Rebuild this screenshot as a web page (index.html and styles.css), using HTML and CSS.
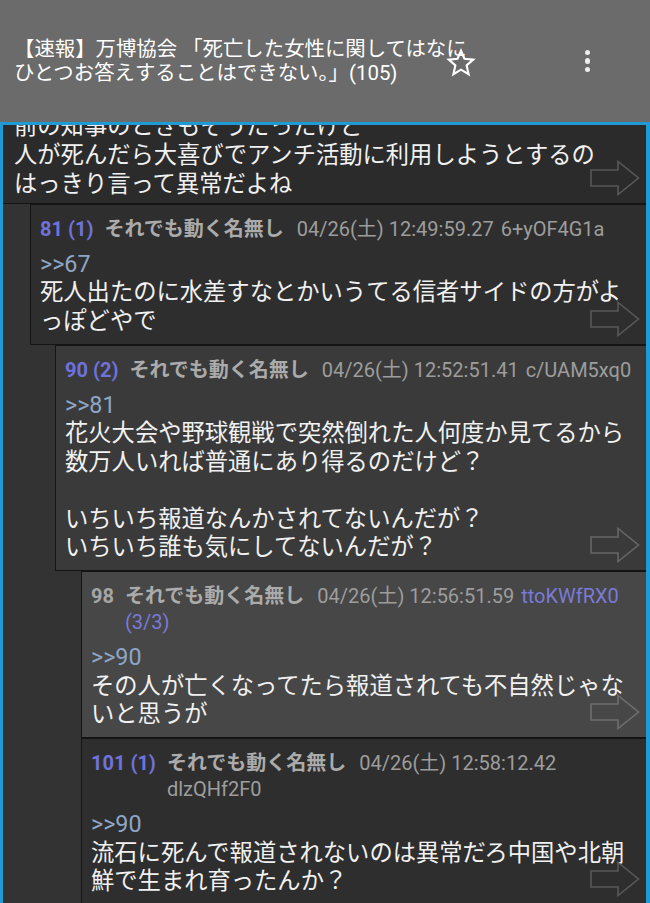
FILE: index.html
```html
<!DOCTYPE html>
<html lang="ja">
<head>
<meta charset="utf-8">
<title>スレッド</title>
<link rel="stylesheet" href="styles.css">
</head>
<body>
<div class="app">
  <header class="topbar">
    <div class="title">【速報】万博協会 「死亡した女性に関してはなにひとつお答えすることはできない。」(105)</div>
    <svg class="star" viewBox="0 0 24 24"><path d="M12 2.2 L14.8 8.6 L21.8 9.3 L16.5 14 L18.1 21 L12 17.3 L5.9 21 L7.5 14 L2.2 9.3 L9.2 8.6 Z" fill="none" stroke="#fff" stroke-width="1.7" stroke-linejoin="miter"/></svg>
    <div class="menu"><span></span><span></span><span></span></div>
  </header>
  <main class="thread">
    <article class="post d0 first">
      <div class="text">前の知事のときもそうだったけど<br>人が死んだら大喜びでアンチ活動に利用しようとするの<br>はっきり言って異常だよね</div>
      <svg class="arrow" viewBox="0 0 50 36"><path d="M1 10 H28 V1.5 L48.5 18 L28 34.5 V26 H1 Z" fill="none" stroke="#585858" stroke-width="1.6"/></svg>
    </article>
    <article class="post d1">
      <div class="meta"><span class="num">81 (1)</span><span class="info"><b class="name">それでも動く名無し</b> <span class="date">04/26(土) 12:49:59.27</span> <span class="id">6+yOF4G1a</span></span></div>
      <div class="text"><span class="anchor">&gt;&gt;67</span><br>死人出たのに水差すなとかいうてる信者サイドの方がよっぽどやで</div>
      <svg class="arrow" viewBox="0 0 50 36"><path d="M1 10 H28 V1.5 L48.5 18 L28 34.5 V26 H1 Z" fill="none" stroke="#585858" stroke-width="1.6"/></svg>
    </article>
    <article class="post d2">
      <div class="meta"><span class="num">90 (2)</span><span class="info"><b class="name">それでも動く名無し</b> <span class="date">04/26(土) 12:52:51.41</span> <span class="id">c/UAM5xq0</span></span></div>
      <div class="text"><span class="anchor">&gt;&gt;81</span><br>花火大会や野球観戦で突然倒れた人何度か見てるから<br>数万人いれば普通にあり得るのだけど？<br><br>いちいち報道なんかされてないんだが？<br>いちいち誰も気にしてないんだが？</div>
      <svg class="arrow" viewBox="0 0 50 36"><path d="M1 10 H28 V1.5 L48.5 18 L28 34.5 V26 H1 Z" fill="none" stroke="#666" stroke-width="1.6"/></svg>
    </article>
    <article class="post d3 hl">
      <div class="meta"><span class="num plain">98</span><span class="info"><b class="name">それでも動く名無し</b> <span class="date">04/26(土) 12:56:51.59</span> <span class="id hot">ttoKWfRX0 (3/3)</span></span></div>
      <div class="text"><span class="anchor">&gt;&gt;90</span><br>その人が亡くなってたら報道されても不自然じゃないと思うが</div>
      <svg class="arrow" viewBox="0 0 50 36"><path d="M1 10 H28 V1.5 L48.5 18 L28 34.5 V26 H1 Z" fill="none" stroke="#6e6e6e" stroke-width="1.6"/></svg>
    </article>
    <article class="post d3">
      <div class="meta"><span class="num">101 (1)</span><span class="info"><b class="name">それでも動く名無し</b> <span class="date">04/26(土) 12:58:12.42</span> <span class="id">dlzQHf2F0</span></span></div>
      <div class="text"><span class="anchor">&gt;&gt;90</span><br>流石に死んで報道されないのは異常だろ中国や北朝鮮で生まれ育ったんか？</div>
      <svg class="arrow" viewBox="0 0 50 36"><path d="M1 10 H28 V1.5 L48.5 18 L28 34.5 V26 H1 Z" fill="none" stroke="#585858" stroke-width="1.6"/></svg>
    </article>
  </main>
</div>
</body>
</html>
```
FILE: styles.css
```css
html, body {
  margin: 0;
  padding: 0;
  background: #333;
}

.app {
  width: 650px;
  height: 903px;
  overflow: hidden;
  font-family: Roboto, "Noto Sans CJK JP", sans-serif;
}

.topbar {
  height: 122px;
  box-sizing: border-box;
  background: #6b6b6b;
  display: flex;
  align-items: center;
  padding: 0 60px 0 14px;
  color: #fff;
}

.title {
  flex: none;
  width: 466px;
  font-size: 20.4px;
  line-height: 24.5px;
}

.star {
  flex: none;
  width: 30px;
  height: 30px;
  margin-left: -34px;
  margin-top: 3px;
}

.menu {
  margin-left: auto;
  display: flex;
  flex-direction: column;
  gap: 3px;
}

.menu span {
  width: 5.5px;
  height: 5.5px;
  border-radius: 50%;
  background: #eee;
}

.thread {
  height: 781px;
  box-sizing: border-box;
  overflow: hidden;
  border-style: solid;
  border-color: #1e9bd4;
  border-width: 3px 4px 0 3px;
  background: #333;
  display: flex;
  flex-direction: column;
}

.post {
  position: relative;
  flex: none;
  background: #2e2e2e;
  border: 1px solid #141414;
  border-right: none;
  padding: 11px 8px 8.5px 9px;
}

.post.d0 {
  border-left: none;
  border-top: none;
  background: #2b2b2b;
  padding: 4px 8px 4px 11px;
}

.post.first {
  margin-top: -17.5px;
}

.post.d0 .text {
  line-height: 29px;
}

.d1 { margin-left: 27px; }
.d2 { margin-left: 52px; background: #3a3a3a; }
.d3 { margin-left: 78px; }
.post.hl { background: #474747; }

.meta {
  display: flex;
  gap: 11px;
  font-size: 20px;
  line-height: 26px;
  margin-bottom: 8px;
}

.num {
  flex: none;
  font-weight: 700;
  color: #6f72dc;
}

.num.plain {
  color: #a6a6a6;
}

.info {
  flex: 1;
  min-width: 0;
  color: #9d9d9d;
}

.name {
  font-weight: 700;
  color: #ababab;
  margin-right: 8px;
}

.date {
  margin-right: 2px;
}

.id.hot {
  color: #7a7ad8;
}

.text {
  font-size: 23.3px;
  line-height: 28.5px;
  color: #f1f1f1;
}

.anchor {
  color: #8ea6c6;
}

.arrow {
  position: absolute;
  right: 6px;
  bottom: 7px;
  width: 50px;
  height: 36px;
}
```
